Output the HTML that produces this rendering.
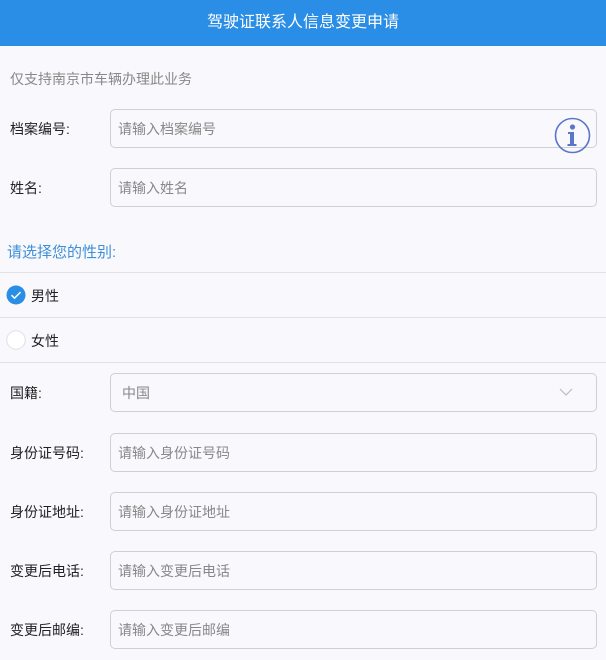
<!DOCTYPE html>
<html><head><meta charset="utf-8"><style>
*{margin:0;padding:0;box-sizing:border-box}
body{width:606px;height:660px;background:#f9f8fd;font-family:"Liberation Sans","Noto Sans CJK SC",sans-serif;font-size:14px;color:#222;position:relative;overflow:hidden}
.hd{position:absolute;left:0;top:0;width:606px;height:46px;background:#2a8ee6;color:#fff;font-size:16px;text-align:center;line-height:46px}
.a{position:absolute}
.lbl{position:absolute;left:10px;font-size:14px;color:#222}
.in{position:absolute;left:110px;width:487px;height:39px;border:1px solid #cfcfd6;border-radius:5px;background:#f9f8fd;color:#888;font-size:14px;line-height:39px;padding-left:7px}
.ln{position:absolute;left:0;width:606px;height:1px;background:#e2e2e6}
</style></head><body>
<div class="hd">驾驶证联系人信息变更申请</div>
<div class="a" style="left:10px;top:69px;color:#888;font-size:14px">仅支持南京市车辆办理此业务</div>
<div class="lbl" style="top:119px">档案编号:</div>
<div class="in" style="top:109px">请输入档案编号</div>
<svg class="a" style="left:554px;top:117px" width="37" height="37" viewBox="0 0 37 37"><circle cx="18.5" cy="18.5" r="17" fill="none" stroke="#5a76cc" stroke-width="1.6"/><circle cx="18.5" cy="10" r="2.6" fill="#5a76cc"/><path d="M14 15h6v12h2.5v2h-9v-2h2.5v-10h-2z" fill="#5a76cc"/></svg>
<div class="lbl" style="top:178px">姓名:</div>
<div class="in" style="top:168px">请输入姓名</div>
<div class="a" style="left:7px;top:241px;color:#3d8fd9;font-size:15px">请选择您的性别:</div>
<div class="ln" style="top:272px"></div>
<svg class="a" style="left:6px;top:285px" width="20" height="20"><circle cx="10" cy="10" r="9.5" fill="#2a8ee6"/><path d="M5.5 10.2l3 3 6-6" fill="none" stroke="#fff" stroke-width="1.5"/></svg>
<div class="a" style="left:31px;top:286px">男性</div>
<div class="ln" style="top:317px"></div>
<svg class="a" style="left:6px;top:330px" width="20" height="20"><circle cx="10" cy="10" r="9.3" fill="#fff" stroke="#e0e0e4"/></svg>
<div class="a" style="left:31px;top:331px">女性</div>
<div class="ln" style="top:362px"></div>
<div class="lbl" style="top:383px">国籍:</div>
<div class="in" style="top:373px;padding-left:11px">中国</div>
<svg class="a" style="left:559px;top:387px" width="14" height="10"><path d="M1 2l6 6 6-6" fill="none" stroke="#bbb" stroke-width="1.2"/></svg>
<div class="lbl" style="top:443px">身份证号码:</div>
<div class="in" style="top:433px">请输入身份证号码</div>
<div class="lbl" style="top:502px">身份证地址:</div>
<div class="in" style="top:492px">请输入身份证地址</div>
<div class="lbl" style="top:561px">变更后电话:</div>
<div class="in" style="top:551px">请输入变更后电话</div>
<div class="lbl" style="top:620px">变更后邮编:</div>
<div class="in" style="top:610px">请输入变更后邮编</div>
</body></html>
